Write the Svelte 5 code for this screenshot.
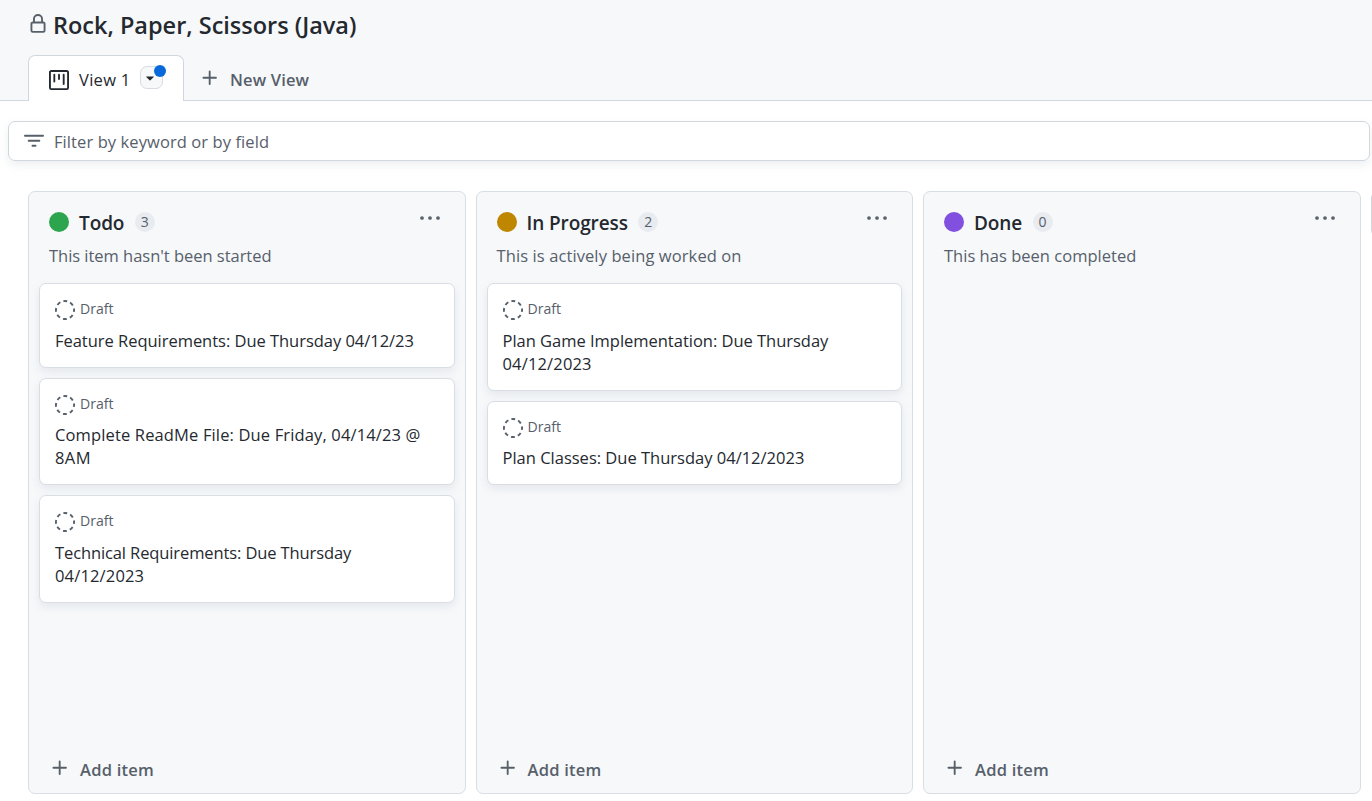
<script>
  const columns = [
    {
      name: 'Todo', count: 3, tone: 'green', note: "This item hasn't been started", track: -0.03,
      items: [
        [['Feature Requirements: Due Thursday 04/12/23', -0.03]],
        [['Complete ReadMe File: Due Friday, 04/14/23 @', 0.14], ['8AM', 0.4]],
        [['Technical Requirements: Due Thursday', -0.11], ['04/12/2023', 0.16]]
      ]
    },
    {
      name: 'In Progress', count: 2, tone: 'amber', note: 'This is actively being worked on', track: 0.1,
      items: [
        [['Plan Game Implementation: Due Thursday', -0.02], ['04/12/2023', 0.16]],
        [['Plan Classes: Due Thursday 04/12/2023', 0]]
      ]
    },
    { name: 'Done', count: 0, tone: 'purple', note: 'This has been completed', track: 0.02, items: [] }
  ];
</script>

{#snippet plus()}
  <svg viewBox="0 0 16 16" width="20" height="20" fill="currentColor"><path d="M7.75 2a.75.75 0 0 1 .75.75V7h4.25a.75.75 0 0 1 0 1.5H8.5v4.25a.75.75 0 0 1-1.5 0V8.5H2.75a.75.75 0 0 1 0-1.5H7V2.75A.75.75 0 0 1 7.75 2Z"/></svg>
{/snippet}

<div class="page">
  <header>
    <div class="title">
      <svg viewBox="0 0 16 16" width="20" height="20" fill="currentColor"><path d="M4 4a4 4 0 0 1 8 0v2h.25c.966 0 1.75.784 1.75 1.75v5.5A1.75 1.75 0 0 1 12.25 15h-8.5A1.75 1.75 0 0 1 2 13.25v-5.5C2 6.784 2.784 6 3.75 6H4Zm8.25 3.5h-8.5a.25.25 0 0 0-.25.25v5.5c0 .138.112.25.25.25h8.5a.25.25 0 0 0 .25-.25v-5.5a.25.25 0 0 0-.25-.25ZM10.5 6V4a2.5 2.5 0 1 0-5 0v2Z"/></svg>
      <h1>Rock, Paper, Scissors (Java)</h1>
    </div>
    <nav>
      <div class="tab">
        <svg viewBox="0 0 16 16" width="20" height="20" fill="currentColor"><path d="M1.75 0h12.5C15.216 0 16 .784 16 1.75v12.5A1.75 1.75 0 0 1 14.25 16H1.75A1.75 1.75 0 0 1 0 14.25V1.75C0 .784.784 0 1.75 0ZM1.5 1.75v12.5c0 .138.112.25.25.25h12.5a.25.25 0 0 0 .25-.25V1.75a.25.25 0 0 0-.25-.25H1.75a.25.25 0 0 0-.25.25ZM11.75 3a.75.75 0 0 1 .75.75v7.5a.75.75 0 0 1-1.5 0v-7.5a.75.75 0 0 1 .75-.75Zm-8.25.75a.75.75 0 0 1 1.5 0v5.5a.75.75 0 0 1-1.5 0ZM8 3a.75.75 0 0 1 .75.75v3.5a.75.75 0 0 1-1.5 0v-3.5A.75.75 0 0 1 8 3Z"/></svg>
        <span>View 1</span>
        <div class="menu">
          <svg viewBox="0 0 10 5" width="8" height="5"><path d="M.6 0h8.8q.8 0 .3.6L5.5 4.7q-.5.5-1 0L.3.6Q-.2 0 .6 0Z" fill="#24292f"/></svg>
          <i></i>
        </div>
      </div>
      <div class="new">{@render plus()}<span>New View</span></div>
    </nav>
  </header>

  <div class="filter">
    <svg viewBox="0 0 16 16" width="20" height="20" fill="currentColor"><path d="M.75 3h14.5a.75.75 0 0 1 0 1.5H.75a.75.75 0 0 1 0-1.5ZM3 7.75A.75.75 0 0 1 3.75 7h8.5a.75.75 0 0 1 0 1.5h-8.5A.75.75 0 0 1 3 7.75Zm3 4a.75.75 0 0 1 .75-.75h2.5a.75.75 0 0 1 0 1.5h-2.5a.75.75 0 0 1-.75-.75Z"/></svg>
    <span>Filter by keyword or by field</span>
  </div>

  <main>
    {#each columns as column}
      <section>
        <div class="head">
          <span class="dot {column.tone}"></span>
          <h2>{column.name}</h2>
          <span class="count">{column.count}</span>
          <svg class="more" viewBox="0 0 20 4" width="20" height="4" fill="currentColor"><circle cx="2" cy="2" r="1.85"/><circle cx="10" cy="2" r="1.85"/><circle cx="18" cy="2" r="1.85"/></svg>
        </div>
        <p class="note" style="letter-spacing: {column.track}px">{column.note}</p>
        <div class="cards">
          {#each column.items as lines}
            <article>
              <div class="kind">
                <svg viewBox="0 0 20 20" width="20" height="20"><circle cx="10" cy="10" r="9.05" fill="none" stroke="currentColor" stroke-width="1.9" stroke-dasharray="3.9 3.208" stroke-dashoffset="1.95"/></svg>
                <span>Draft</span>
              </div>
              {#each lines as [text, track]}<div class="line" style="letter-spacing: {track}px">{text}</div>{/each}
            </article>
          {/each}
        </div>
        <div class="add">{@render plus()}<span>Add item</span></div>
      </section>
    {/each}
    <div class="next"></div>
  </main>
</div>

<style>
  :global(body) { margin: 0; background: #fff; overflow: hidden; }
  .page { width: 1372px; height: 801px; overflow: hidden; display: flex; flex-direction: column; box-sizing: border-box; font: 16.5px/23px "Open Sans", "Noto Sans", sans-serif; color: #24292f; }
  h1, h2, p { margin: 0; }
  svg { display: block; flex: none; }
  span { white-space: nowrap; }
  header { height: 101px; box-sizing: border-box; background: #f6f8fa; border-bottom: 1px solid #d0d7de; flex: none; }
  .title { height: 55px; display: flex; padding-left: 28px; color: #57606a; }
  .title svg { margin-top: 14px; }
  h1 { margin: 8px 0 0 5px; font-size: 23.5px; line-height: 34px; font-weight: 600; letter-spacing: -.01px; color: #24292f; white-space: nowrap; }
  nav { display: flex; height: 46px; }
  .tab { box-sizing: border-box; width: 156px; height: 46px; margin-left: 28px; padding: 2px 0 0 20px; display: flex; align-items: center; background: #fff; border: 1px solid #d0d7de; border-bottom: 0; border-radius: 7px 7px 0 0; }
  .tab span { margin-left: 10px; width: 51px; letter-spacing: .3px; }
  .menu { position: relative; box-sizing: border-box; width: 23px; height: 23px; margin: -4px 0 0 10px; padding: 1px 3px 0 0; border: 1px solid #d8dbe0; border-radius: 7px; background: #f6f8fa; display: flex; align-items: center; justify-content: center; }
  .menu i { position: absolute; left: 13px; top: -2px; width: 12px; height: 12px; border-radius: 50%; background: #0969da; }
  .new { display: flex; align-items: center; margin-left: 16px; color: #57606a; font-weight: 600; letter-spacing: .15px; }
  .new span { margin: 2px 0 0 10px; }
  .filter { flex: none; box-sizing: border-box; width: 1362px; height: 40px; margin: 20px 0 0 8px; padding-left: 15px; display: flex; align-items: center; border: 1px solid #d0d7de; border-radius: 7px; color: #57606a; box-shadow: 0 4px 8px rgba(140,149,159,.15); }
  .filter span { margin: 0 0 0 10px; letter-spacing: .09px; }
  main { display: flex; gap: 10px; margin: 30px 0 0 28px; height: 603px; }
  section { box-sizing: border-box; width: 437.5px; flex: none; display: flex; flex-direction: column; background: #f6f8fa; border: 1px solid #d8dee4; border-radius: 7px; }
  .head { flex: none; display: flex; align-items: center; height: 32px; padding: 14px 25px 0 20px; }
  .dot { width: 20px; height: 20px; border-radius: 50%; }
  .green { background: #2da44e; }
  .amber { background: #bf8700; }
  .purple { background: #8250df; }
  h2 { margin: 1px 0 0 10px; font-size: 19px; line-height: 28px; font-weight: 600; letter-spacing: -.1px; }
  .count { margin-left: 10.4px; min-width: 20px; height: 20px; border-radius: 10px; background: #e8ebef; font-size: 14px; line-height: 20px; text-align: center; color: #57606a; font-weight: 500; }
  .more { margin: -8px 0 0 auto; color: #57606a; }
  .note { flex: none; padding: 6px 0 0 20px; height: 39px; color: #57606a; }
  .cards { flex: 1; display: flex; flex-direction: column; gap: 10px; padding: .3px 10px 0; }
  article { box-sizing: border-box; padding: 14px 15px 14.4px; border: 1px solid #d8dee4; border-radius: 7px; background: #fff; box-shadow: 0 4px 8px rgba(140,149,159,.15); }
  .kind { display: flex; align-items: center; height: 24px; margin-bottom: 7.5px; font-size: 14.1px; color: #57606a; }
  .kind span { margin: -2.9px 0 0 5px; }
  .line { height: 22.75px; line-height: 22.75px; white-space: nowrap; }
  .add { flex: none; display: flex; align-items: center; height: 50px; padding-left: 21px; color: #57606a; font-weight: 600; letter-spacing: .25px; }
  .add span { margin: 3px 0 0 10px; }
  .next { box-sizing: border-box; flex: none; width: 40px; height: 46px; border: 1px solid #d0d7de; border-radius: 7px; background: #f6f8fa; }
</style>
